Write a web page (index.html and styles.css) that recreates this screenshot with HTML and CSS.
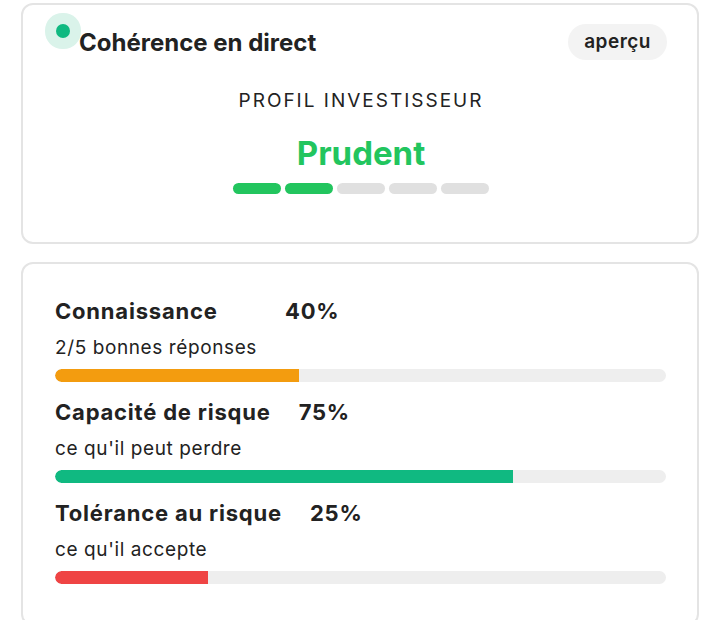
FILE: index.html
```html
<!DOCTYPE html>
<html lang="fr">
<head>
<meta charset="utf-8"/>
<meta content="width=device-width, initial-scale=1.0" name="viewport"/>
<title>Cohérence en direct</title>
<link rel="stylesheet" href="styles.css">
</head>
<body>
<div class="wrap">
  <section class="card card-top">
    <div class="head">
      <span class="live-dot"></span>
      <h2 class="title">Cohérence en direct</h2>
      <span class="pill">aperçu</span>
    </div>
    <p class="kicker">PROFIL INVESTISSEUR</p>
    <p class="profile">Prudent</p>
    <div class="steps">
      <span class="step on"></span>
      <span class="step on"></span>
      <span class="step"></span>
      <span class="step"></span>
      <span class="step"></span>
    </div>
  </section>

  <section class="card card-scores">
    <div class="score">
      <div class="score-head"><span class="label">Connaissance</span><span class="pct">40%</span></div>
      <div class="sub">2/5 bonnes réponses</div>
      <div class="track"><div class="fill orange" style="width: 40%"></div></div>
    </div>
    <div class="score">
      <div class="score-head"><span class="label">Capacité de risque</span><span class="pct">75%</span></div>
      <div class="sub">ce qu'il peut perdre</div>
      <div class="track"><div class="fill green" style="width: 75%"></div></div>
    </div>
    <div class="score">
      <div class="score-head"><span class="label">Tolérance au risque</span><span class="pct">25%</span></div>
      <div class="sub">ce qu'il accepte</div>
      <div class="track"><div class="fill red" style="width: 25%"></div></div>
    </div>
  </section>
</div>
</body>
</html>
```

FILE: styles.css
```css
body { margin: 0; background: #fff; font-family: Inter, "Noto Sans", sans-serif; color: #222; }

.wrap {
  width: 678px;
  margin-left: 21px;
  padding-top: 3px;
  display: flex;
  flex-direction: column;
  gap: 18px;
}

.card {
  border: 2px solid #e4e4e4;
  border-radius: 12px;
  background: #fff;
}

.card-top { padding: 19px 30px 48px 32px; text-align: center; }

.head { display: flex; align-items: center; height: 36px; }
.live-dot {
  align-self: flex-start;
  width: 14px;
  height: 14px;
  margin-left: 1px;
  border-radius: 50%;
  background: #10b981;
  box-shadow: 0 0 0 11px #daf3ea;
}
.title { margin: 0 0 0 9px; font-size: 24px; font-weight: 700; flex: 1; text-align: left; }
.pill {
  background: #f3f3f3;
  border-radius: 18px;
  height: 36px;
  line-height: 36px;
  padding: 0 16px;
  font-size: 19px;
  font-weight: 600;
  letter-spacing: 0.5px;
}

.kicker { margin: 29px 0 0; font-size: 19px; line-height: 24px; letter-spacing: 2px; }
.profile { margin: 20px 0 0; font-size: 33px; line-height: 40px; font-weight: 700; color: #22c55e; }

.steps { display: flex; justify-content: center; gap: 4px; margin-top: 10px; }
.step { width: 48px; height: 11px; border-radius: 6px; background: #e0e0e0; }
.step.on { background: #22c55e; }

.card-scores { padding: 34px 31px 40px 32px; }
.score + .score { margin-top: 17px; }
.score-head { display: flex; gap: 28px; font-size: 22px; line-height: 26px; font-weight: 700; letter-spacing: 0.8px; }
.label { min-width: 202px; }
.sub { margin-top: 12px; font-size: 19px; line-height: 24px; letter-spacing: 0.6px; }
.track { margin-top: 9px; height: 13px; border-radius: 7px; background: #eeeeee; overflow: hidden; }
.fill { height: 100%; border-radius: 7px 0 0 7px; }
.orange { background: #f39c0f; }
.green { background: #10b981; }
.red { background: #ef4444; }
```
